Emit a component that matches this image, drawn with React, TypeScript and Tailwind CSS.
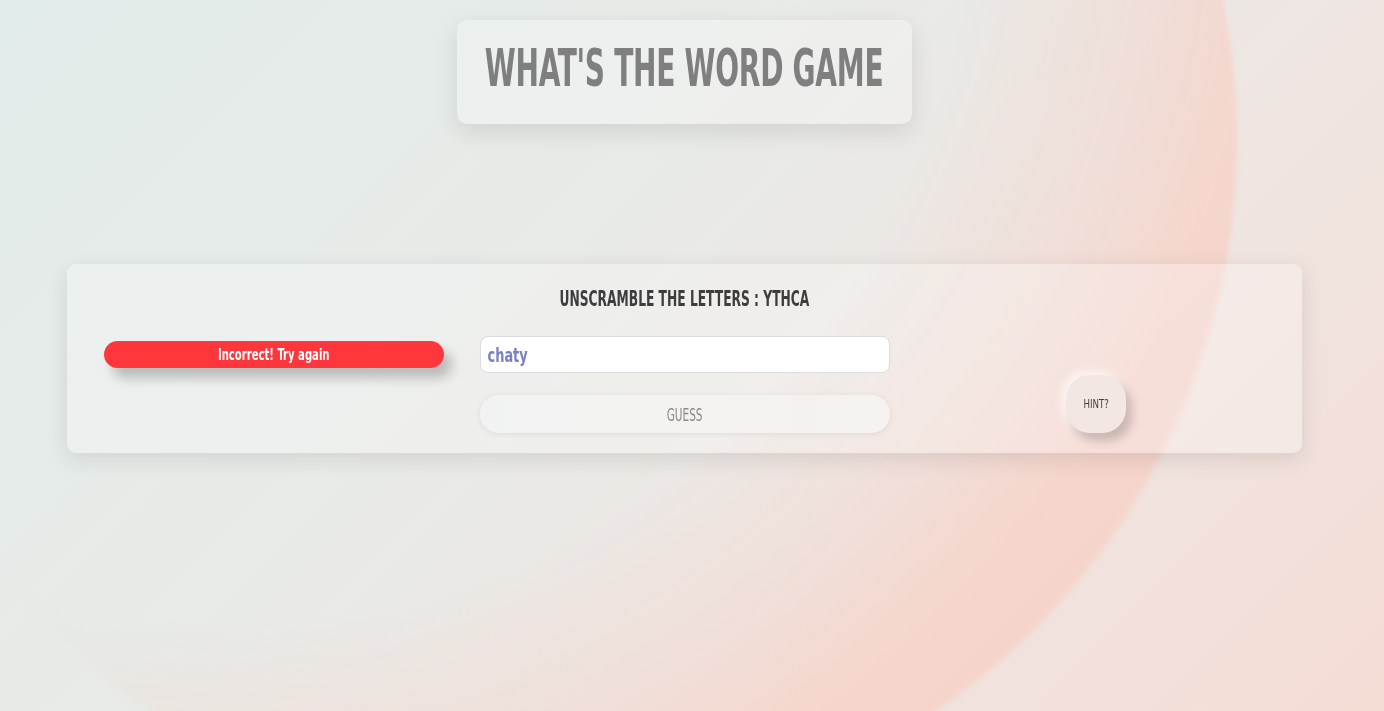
import { useState } from 'react'

const font = "font-['DejaVu_Sans_Condensed','DejaVu_Sans',sans-serif]"

export default function App() {
  const [guess, setGuess] = useState('chaty')

  return (
    <div className={`relative min-h-[711px] w-full overflow-hidden bg-[linear-gradient(135deg,#e2ecea_0%,#e7ebe8_35%,#eee6e2_65%,#f5dcd5_100%)] ${font}`}>
      {/* big soft circle behind everything, pink only toward its right/bottom edge */}
      <div className="pointer-events-none absolute left-[-151px] top-[-555px] h-[1388px] w-[1388px] rounded-full bg-[radial-gradient(circle_at_380px_440px,rgba(248,205,192,0)_740px,rgba(248,205,192,0.28)_900px,rgba(248,204,192,0.6)_1030px)] blur-[2px]" />

      <div className="relative flex flex-col items-center pt-5 pr-[15px]">
        {/* title */}
        <div className="flex h-[104px] w-[455px] items-start justify-center rounded-[10px] bg-white/25 pt-[18px] shadow-[0_8px_24px_rgba(0,0,0,0.10)]">
          <h1 className="inline-block scale-x-[0.6] whitespace-nowrap text-[52px] font-bold leading-[60px] tracking-[-0.5px] text-[#7f7f7f]">
            WHAT&apos;S THE WORD GAME
          </h1>
        </div>

        {/* game card */}
        <div className="mt-[140px] w-[1235px] rounded-[9px] bg-white/25 pt-[22px] pb-[20px] shadow-[0_6px_22px_rgba(0,0,0,0.10)]">
          <h2 className="text-center text-[22px] font-bold leading-[26px] text-[#3d3d3d]">
            <span className="inline-block scale-x-[0.62] whitespace-nowrap">UNSCRAMBLE THE LETTERS : YTHCA</span>
          </h2>

          <div className="mt-[24px] grid grid-cols-[413px_410px_412px]">
            <div className="flex items-start justify-center pt-[5px]">
              <div className="flex h-[27px] w-[340px] items-center justify-center rounded-full bg-[#ff373d] text-[16px] font-bold text-white shadow-[8px_10px_12px_rgba(0,0,0,0.22)]">
                <span className="inline-block scale-x-[0.7] whitespace-nowrap">Incorrect! Try again</span>
              </div>
            </div>

            <div className="flex flex-col gap-[22px]">
              <div className="h-[37px] w-full overflow-hidden rounded-[8px] border border-[#dcdcdc] bg-white">
                <input
                  value={guess}
                  onChange={(e) => setGuess(e.target.value)}
                  className="h-[35px] w-[547px] origin-left scale-x-[0.72] bg-transparent px-[9px] text-[20px] font-bold text-[#7a80c4] outline-none"
                />
              </div>
              <button className="h-[38px] w-full rounded-full bg-[linear-gradient(90deg,#f1f3f2,#f5f2f0)] text-[18px] text-[#8a8a8a] shadow-[0_1px_6px_rgba(0,0,0,0.08)]">
                <span className="inline-block scale-x-[0.65]">GUESS</span>
              </button>
            </div>

            <div className="flex items-end justify-center">
              <button className="h-[58px] w-[60px] rounded-[24px] bg-[#f3e7e3] text-[13px] text-[#3f3f3f] shadow-[6px_8px_10px_rgba(0,0,0,0.18),-4px_-4px_10px_rgba(255,255,255,0.7)]">
                <span className="inline-block scale-x-[0.74]">HINT?</span>
              </button>
            </div>
          </div>
        </div>
      </div>
    </div>
  )
}
